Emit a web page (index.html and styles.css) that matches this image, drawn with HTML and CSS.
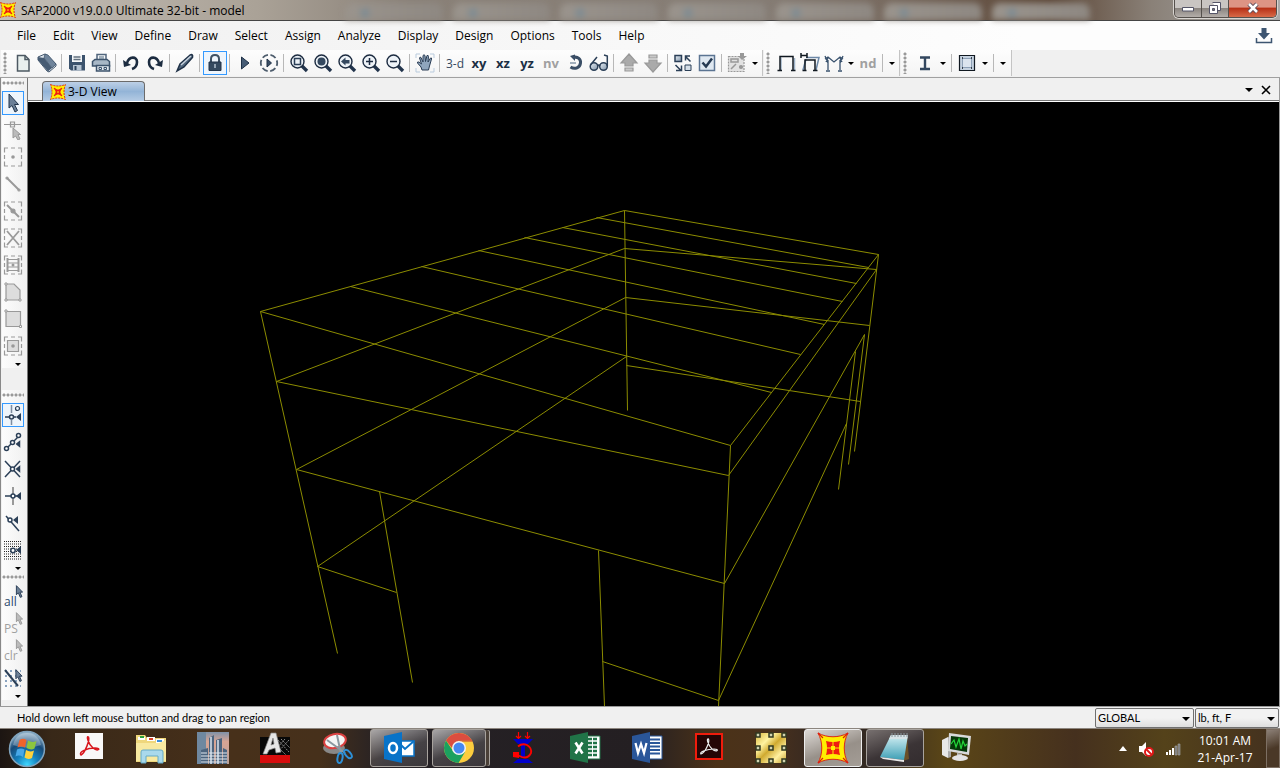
FILE: index.html
```html
<!DOCTYPE html>
<html lang="en">
<head>
    <meta charset="UTF-8">
    <meta name="viewport" content="width=device-width, initial-scale=1.0">
    <title>SAP2000 v19.0.0 Ultimate 32-bit - model</title>
    <link rel="stylesheet" href="styles.css">
</head>
<body>
    <!-- shared shapes -->
    <svg class="defs" width="0" height="0" aria-hidden="true">
        <defs>
            <linearGradient id="steel" x1="0" y1="0" x2="1" y2="1">
                <stop offset="0" stop-color="#e8eff5"/><stop offset="1" stop-color="#7f93a8"/>
            </linearGradient>
            <linearGradient id="gold" x1="0" y1="0" x2="1" y2="1">
                <stop offset="0" stop-color="#d8b840"/><stop offset=".3" stop-color="#fff3a0"/>
                <stop offset=".5" stop-color="#d0aa30"/><stop offset=".75" stop-color="#fff0a0"/><stop offset="1" stop-color="#c8a330"/>
            </linearGradient>
            <linearGradient id="teal" x1="0" y1="0" x2="0" y2="1">
                <stop offset="0" stop-color="#d5f0f4"/><stop offset="1" stop-color="#3d9fb5"/>
            </linearGradient>
            <linearGradient id="dusk" x1="0" y1="0" x2="0" y2="1">
                <stop offset="0" stop-color="#7f92a8"/><stop offset=".3" stop-color="#d8a594"/><stop offset="1" stop-color="#b9a29c"/>
            </linearGradient>
            <radialGradient id="orb" cx=".5" cy=".95" r=".9">
                <stop offset="0" stop-color="#3fd8ff"/><stop offset=".35" stop-color="#1480bd"/><stop offset=".7" stop-color="#174a78"/><stop offset="1" stop-color="#8fb0c8"/>
            </radialGradient>
            <symbol id="sap" viewBox="0 0 32 32">
                <path d="M1 1C10 6 22 6 31 1C26 10 26 22 31 31C22 26 10 26 1 31C6 22 6 10 1 1Z" fill="#ffee00" stroke="#d82818" stroke-width="1"/>
                <path d="M9 9Q16 11 23 9Q21 16 23 23Q16 21 9 23Q11 16 9 9Z" fill="#f01c10"/>
                <path d="M16 10V22M10 16H22" stroke="#ffee00" stroke-width="1"/>
                <path d="M14 14H18V18H14Z" fill="#ffee00"/>
                <path d="M1 1L6 6M31 1L26 6M1 31L6 26M31 31L26 26" stroke="#e01c10" stroke-width="1.2"/>
            </symbol>
            <symbol id="sap-small" viewBox="0 0 16 16">
                <path d="M.5 .5Q8 3.500 15.500 .5Q12.500 8 15.500 15.500Q8 12.500 .5 15.500Q3.500 8 .5 .5Z" fill="#ffee00" stroke="#e02818" stroke-width="1" stroke-dasharray="2 1"/>
                <path d="M4 4L7 6H9L12 4L10 7V9L12 12L9 10H7L4 12L6 9V7Z" fill="#f01c10" stroke="#f01c10"/>
                <path d="M8 7V9" stroke="#ffee00"/>
            </symbol>
            <symbol id="lens" viewBox="0 0 20 20">
                <path d="M13 13L18 18" stroke="#22344c" stroke-width="3.4"/>
                <circle cx="8.500" cy="8.500" r="6.500" fill="#edf2f7" stroke="#1c2b40" stroke-width="1.4"/>
            </symbol>
            <symbol id="cursor" viewBox="0 0 12 20">
                <path d="M2 1V15L5 12L8 19L10.500 18L7.500 11H11.500Z"/>
            </symbol>
            <symbol id="dashed" viewBox="0 0 20 20">
                <path d="M1.500 5.500V1H5M8 1H12M15 1H18.500V5.500M18.500 8V12M18.500 14.500V19H15M12 19H8M5 19H1.500V14.500M1.500 12V8" fill="none"/>
            </symbol>
            <symbol id="snap" viewBox="0 0 5 8"><path d="M5 0V8L0 4Z" fill="#2b3f57" stroke="none"/></symbol>
        </defs>
    </svg>

    <div class="desktop">
        <header class="titlebar">
            <svg class="title-icon" width="16" height="16"><use href="#sap-small"/></svg>
            <h1>SAP2000 v19.0.0 Ultimate 32-bit - model</h1>
            <div class="ghost-tabs"><i></i><i></i><i></i><i></i><i></i><i></i><i></i></div>
            <div class="window-buttons">
                <button aria-label="Minimize"><svg width="14" height="14"><path d="M1.500 6.500H12.500V10H1.500Z" fill="#fff" stroke="#555568"/></svg></button>
                <button aria-label="Restore"><svg width="14" height="14"><path d="M4.500 1.500H12.500V9.500H10M1.500 4.500H9.500V12.500H1.500Z" fill="#fff" stroke="#555568"/><path d="M4.500 7.500H6.500V9.500H4.500Z" fill="#777" stroke="#555568"/></svg></button>
                <button class="close" aria-label="Close"><svg width="14" height="14"><path d="M3 3L11 11M11 3L3 11" stroke="#5b4a58" stroke-width="4.500"/><path d="M3 3L11 11M11 3L3 11" stroke="#fff" stroke-width="2.500"/></svg></button>
            </div>
        </header>

        <nav class="menu">
            <button>File</button><button>Edit</button><button>View</button><button>Define</button><button>Draw</button><button>Select</button><button>Assign</button><button>Analyze</button><button>Display</button><button>Design</button><button>Options</button><button>Tools</button><button>Help</button>
            <button class="download" aria-label="Download"><svg width="18" height="18"><path d="M6.500 1H11.500V6H15L9 12.500L3 6H6.500Z" fill="#3d5571"/><path d="M1.500 11V15.500H16.500V11" fill="none" stroke="#3d5571" stroke-width="1.500"/></svg></button>
        </nav>

        <div class="toolbar">
            <div class="strip">
                <span class="grip"></span>
                <button aria-label="New"><svg class="icon"><path d="M4.500 2.500H12L16 6.500V18H4.500Z" fill="#e9f0ee" stroke="#4d5963"/><path d="M12 2.500V6.500H16" stroke="#4d5963"/></svg></button>
                <button aria-label="Open"><svg class="icon"><path d="M1 4L8 1L19 11V13L12 19L10 18L1 7Z" fill="#dfe6ed" stroke="#41556c" stroke-width="1"/><path d="M1 4L7 5L15 15L11 18.500L1 7Z" fill="#465b73" stroke="none"/><path d="M8 1L11 2L19 11L15 15L7 5Z" fill="#6f849b" stroke="#41556c" stroke-width=".8"/></svg></button>
                <span class="sep"></span>
                <button aria-label="Save"><svg class="icon"><path d="M2 2H18V17.500H4L2 15.500Z" fill="#3c536d" stroke="none"/><path d="M5 2H15V9H5Z" fill="#f5f7f9" stroke="none"/><path d="M6.500 4H13.500M6.500 6.500H13.500" stroke="#62707e"/><path d="M6 12H14.500V17.500H6Z" fill="#b5c3d1" stroke="none"/><path d="M7.500 13H9.500V17H7.500Z" fill="#2d435c" stroke="none"/></svg></button>
                <button aria-label="Print"><svg class="icon"><path d="M6 8V1.500H15V8" fill="#f6f8fa" stroke="#51667d"/><path d="M8 4H13M8 6H13" stroke="#8798a8"/><path d="M1.500 8.500L4 6.500H16L18.500 8.500V13H1.500Z" fill="#a8b7c6" stroke="#3d536c"/><path d="M5.500 12.500H18.500V18H5.500Z" fill="#e2e8ef" stroke="#3d536c"/><path d="M8 14.500H10.500V16.500H8ZM13 14.500H15.500V16.500H13Z" stroke="#3d536c" stroke-width="1"/></svg></button>
                <span class="sep"></span>
                <button aria-label="Undo"><svg class="icon"><path d="M6 10C8 3 16 3 16 9C16 12 14 15 11 16" stroke-width="2.600" stroke="#1c2c40"/><path d="M2 7L10 12L3 14Z" fill="#1c2c40" stroke="none"/></svg></button>
                <button aria-label="Redo"><svg class="icon"><path d="M14 10C12 3 4 3 4 9C4 12 6 15 9 16" stroke-width="2.600" stroke="#1c2c40"/><path d="M18 7L10 12L17 14Z" fill="#1c2c40" stroke="none"/></svg></button>
                <span class="sep"></span>
                <button aria-label="Refresh window"><svg class="icon"><path d="M2 18L5 11L14.500 2.500Q18.500 0 17.500 4.500L9 14Z" fill="#52677e" stroke="#1f3147"/><path d="M6 12L16 3" stroke="#c7d2dd"/></svg></button>
                <span class="sep"></span>
                <button class="active" aria-label="Unlock model"><svg class="icon"><path d="M6 9V6Q6 2 10 2Q14 2 14 6V9" stroke="#3e5164" stroke-width="2"/><path d="M4 9H16V17.500H4Z" fill="#34495f" stroke="#22344a" stroke-width="1"/><path d="M10 11V15" stroke="#b2c0ce"/></svg></button>
                <span class="sep"></span>
                <button aria-label="Run analysis"><svg class="icon"><path d="M6.500 4L14 10L6.500 16Z" fill="#465c75" stroke="#1f3147" stroke-width="1"/></svg></button>
                <button aria-label="Model alive"><svg class="icon"><circle cx="10" cy="10" r="8.200" stroke="#4d5c6c" stroke-width="1.800" stroke-dasharray="6 2.580" stroke-dashoffset="3"/><path d="M8 6L12.500 10L8 14Z" fill="#3a4e65" stroke="#1f3147" stroke-width="1"/></svg></button>
                <span class="sep"></span>
                <button aria-label="Rubber band zoom"><svg class="icon"><use href="#lens"/><path d="M5.500 5.500H11.500V11.500H5.500Z"/></svg></button>
                <button aria-label="Restore full view"><svg class="icon"><use href="#lens"/><circle cx="8.500" cy="8.500" r="4" fill="#34485f" stroke="none"/></svg></button>
                <button aria-label="Previous zoom"><svg class="icon"><use href="#lens"/><path d="M4 8.500L8.500 4.500V7H12.500V10.500H8.500V12.500Z" fill="#34485f" stroke="none"/></svg></button>
                <button aria-label="Zoom in"><svg class="icon"><use href="#lens"/><path d="M8.500 5V12M5 8.500H12" stroke="#1c2b40"/></svg></button>
                <button aria-label="Zoom out"><svg class="icon"><use href="#lens"/><path d="M5 8.500H12" stroke="#1c2b40"/></svg></button>
                <span class="sep"></span>
                <button aria-label="Pan"><svg class="icon"><path d="M1 5V1H5M15 1H19V5M19 15V19H15M5 19H1V15" stroke="#b9cbdd" stroke-width="1"/><path d="M7 17L6 14L2.500 10Q2 8.500 4 9L6.500 11L4.500 5Q5 3.500 6 4.500L8 9L8 2.500Q9 1 10 2.500L10.500 8.500L12 2.500Q13.500 2 13.500 3.500L13 9L15.500 5Q17 4.500 16.500 6L14.500 13L13.500 17Z" fill="#8fa5bd" stroke="#2a3d55" stroke-width="1"/></svg></button>
                <span class="sep"></span>
                <button class="txt">3-d</button>
                <button class="txt bold">xy</button>
                <button class="txt bold">xz</button>
                <button class="txt bold">yz</button>
                <button class="txt bold off">nv</button>
                <button aria-label="Rotate 3D view"><svg class="icon"><path d="M8 4.500C13 3 16 6.500 15.500 10C15 14.500 10 17 5.500 14" stroke="#3a4e66" stroke-width="3"/><path d="M5 3L10 1.500V8Z" fill="#3a4e66" stroke="none"/><path d="M5 10H11" stroke="#8798aa"/></svg></button>
                <button aria-label="Perspective toggle"><svg class="icon"><circle cx="5" cy="13.500" r="3.800" fill="url(#steel)"/><circle cx="14.500" cy="13.500" r="3.800" fill="url(#steel)"/><path d="M1.500 12L8 4M18.300 13V3L15 2M8.500 13Q10 11 11 13"/></svg></button>
                <span class="sep"></span>
                <button disabled aria-label="Move up in list"><svg class="icon gray"><path d="M10 1L18 10H14V13H6V10H2Z" fill="#aaa"/><path d="M6 15H14V18H6Z" fill="#c8c8c8"/></svg></button>
                <button disabled aria-label="Move down in list"><svg class="icon gray"><path d="M10 19L18 10H14V7H6V10H2Z" fill="#aaa"/><path d="M6 2H14V5H6Z" fill="#c8c8c8"/></svg></button>
                <span class="sep"></span>
                <button aria-label="Object shrink toggle"><svg class="icon"><path d="M2 2.500H8.500V8.500H2Z" fill="url(#steel)"/><path d="M12 12H18V17.500H12Z" fill="#d5dee7" stroke-width="1"/><path d="M17.500 8.500L12.500 3.500M12.500 7.500V3H17M2.500 12L8 17.500M3 17.500H8.500V12.500" stroke-width="1.500"/></svg></button>
                <button aria-label="Set display options"><svg class="icon"><path d="M2.500 2.500H17.500V17.500H2.500Z" fill="#dfe8f1" stroke="#5b7492"/><path d="M5.500 9.500L9 13.500L15 5.500" stroke="#263a52" stroke-width="2.500"/></svg></button>
                <span class="sep"></span>
                <button disabled aria-label="Assign to group"><svg class="icon gray"><path d="M1.500 3.500H17V18.500H1.500Z" fill="#e2e2e2" stroke-dasharray="2 1"/><path d="M4 6H11V9H4ZM4 16L9 11" stroke-width="1.500"/><circle cx="14" cy="14" r="1.500" fill="#999"/><path d="M13 0H17V3H20L15 7L11 3H13Z" fill="#999" stroke="none"/></svg></button>
                <button class="drop" aria-label="More view tools"></button>
            </div>
            <div class="strip">
                <span class="grip"></span>
                <button aria-label="Show undeformed shape"><svg class="icon"><path d="M5 4.500V17M18.500 5V17" stroke="#9db2c8"/><path d="M4 17V3.500H17V17M1.500 17.500H6M15 17.500H19.500" stroke="#101820"/></svg></button>
                <button aria-label="Show deformed shape"><svg class="icon"><path d="M6 4.500H19L16 17M6 6L3 17" stroke="#6d89a8"/><path d="M1 0V5M7 0V5M1 2.500H7M5 17V7H15V17M2.500 17.500H6.500M13 17.500H17.500" stroke="#101820"/></svg></button>
                <button aria-label="Show forces"><svg class="icon"><path d="M4 17V7M16 17V7M1 3L4 10M19 3L16 10M1 6L4 4L10 9L16 4L19 6M4 5L2 9M16 5L18 9M2 18H6M14 18H18" stroke="#38516d" stroke-width="1.300"/></svg></button>
                <button class="drop small" aria-label="Force options"></button>
                <button class="txt bold off">nd</button>
                <span class="sep"></span>
                <button class="drop" aria-label="More display tools"></button>
            </div>
            <div class="strip">
                <span class="grip"></span>
                <button aria-label="Frame design"><svg class="icon"><path d="M5 4.500H15M5 16H15M10 4.500V16" stroke="#33475f" stroke-width="2.400"/></svg></button>
                <button class="drop" aria-label="Frame design options"></button>
                <span class="sep"></span>
                <button aria-label="Shell design"><svg class="icon"><path d="M2.500 2.500H17.500V17.500H2.500Z" fill="#c5d2e0" stroke="#101820" stroke-width="1.200"/><path d="M5.500 5.500H14.500V14.500H5.500Z" fill="#dbe4ee" stroke="#8da0b6" stroke-width="1"/><path d="M5 5H6M14 5H15M5 15H6M14 15H15" stroke="#101820"/></svg></button>
                <button class="drop" aria-label="Shell design options"></button>
                <span class="sep"></span>
                <button class="drop" aria-label="More design tools"></button>
            </div>
        </div>

        <div class="work">
            <aside class="side">
                <div class="side-group draw">
                    <span class="grip"></span>
                    <button class="active" aria-label="Select pointer"><svg class="icon"><path d="M6 1V15L9 12.500L12 19L14.500 17.500L11.500 11.500H15.500Z" fill="#6a7f97" stroke="#22354c" stroke-width="1"/></svg></button>
                    <button aria-label="Reshape object"><svg class="icon gray"><path d="M1 4.500H18M7.500 2H11.500V7H7.500Z" fill="#eee"/><path d="M10 8V18L12.500 16L15 20L17 19L15 14.500H17.500Z" fill="#bbb" stroke-width="1"/></svg></button>
                    <button aria-label="Draw special joint"><svg class="icon gray"><use href="#dashed"/><circle cx="10" cy="10" r="1.800" fill="#999" stroke="none"/></svg></button>
                    <button aria-label="Draw frame"><svg class="icon gray"><path d="M4 4L16 16" stroke-width="2"/><circle cx="4" cy="4" r="1"/><circle cx="16" cy="16" r="1"/></svg></button>
                    <button aria-label="Quick draw frame"><svg class="icon gray"><use href="#dashed"/><path d="M4 4L16 16" stroke-width="2"/><circle cx="10" cy="10" r="2" fill="#999"/></svg></button>
                    <button aria-label="Quick draw braces"><svg class="icon gray"><use href="#dashed"/><path d="M4 3L16 17M16 3L4 17" stroke-width="1.800"/></svg></button>
                    <button aria-label="Quick draw secondary beams"><svg class="icon gray"><use href="#dashed"/><path d="M4.500 3V17M15.500 3V17" stroke-width="2"/><path d="M5 4.500H15M5 8H15M5 12H15M5 15.500H15" stroke-width="1"/><circle cx="10" cy="10" r="1.500" fill="#999" stroke="none"/></svg></button>
                    <button aria-label="Draw poly area"><svg class="icon gray"><path d="M3 2H11L17 8V18H3Z" fill="#ddd"/><path d="M2 1H4V3H2ZM2 17H4V19H2ZM16 17H18V19H16Z" fill="#fff" stroke-width="1"/></svg></button>
                    <button aria-label="Draw rectangular area"><svg class="icon gray"><path d="M3 2.500H17.500V17.500H3Z" fill="#ddd"/><path d="M2 1H4V3H2ZM16.500 16.500H18.500V18.500H16.500Z" fill="#fff" stroke-width="1"/></svg></button>
                    <button aria-label="Quick draw area"><svg class="icon gray"><use href="#dashed"/><path d="M4.500 4.500H15.500V15.500H4.500Z" fill="#ddd"/><circle cx="10" cy="10" r="1.800" fill="#999" stroke="none"/></svg></button>
                    <button class="drop" aria-label="More draw tools"></button>
                </div>
                <div class="side-group">
                    <span class="grip"></span>
                    <button class="active" aria-label="Snap to points"><svg class="icon"><path d="M8.500 0V8M8.500 15V20" stroke="#7d8da0"/><circle cx="8.500" cy="12" r="2"/><circle cx="14.500" cy="3.500" r="2" stroke-width="1.200"/><path d="M2 12H6M11 12H13"/><use href="#snap" x="13" y="8" width="5" height="8"/></svg></button>
                    <button aria-label="Snap to ends and midpoints"><svg class="icon"><path d="M4 16L16 4"/><g fill="#fff"><circle cx="3.500" cy="16.500" r="2"/><circle cx="9.500" cy="10.500" r="2"/><circle cx="15.500" cy="3.500" r="2"/></g><use href="#snap" x="12.500" y="8" width="5" height="8"/></svg></button>
                    <button aria-label="Snap to intersections"><svg class="icon"><path d="M2 2L17 18M17 2L2 18"/><circle cx="9.500" cy="10" r="2" fill="#fff"/><use href="#snap" x="12.500" y="6" width="5" height="8"/></svg></button>
                    <button aria-label="Snap to perpendicular"><svg class="icon"><path d="M10 1V19" stroke="#999" stroke-width="2"/><path d="M2 10H15"/><circle cx="10" cy="10" r="2" fill="#fff"/><use href="#snap" x="13" y="6" width="5" height="8"/></svg></button>
                    <button aria-label="Snap to lines and edges"><svg class="icon"><path d="M3 3L16 18"/><circle cx="7" cy="7" r="2" fill="#fff"/><use href="#snap" x="10" y="3" width="5" height="8"/></svg></button>
                    <button aria-label="Snap to fine grid"><svg class="icon"><path d="M1 1.500H18M1 4H18M1 6.500H18M1 9H18M1 11.500H18M1 14H18M1 16.500H18M1 19H18" stroke="#222" stroke-width="1" stroke-dasharray="1 1"/><circle cx="10" cy="10.500" r="2.200" fill="#fff"/><use href="#snap" x="13" y="6" width="5" height="8"/></svg></button>
                    <button class="drop" aria-label="More snap tools"></button>
                </div>
                <div class="side-group">
                    <span class="grip"></span>
                    <button class="pick"><span>all</span><svg width="8" height="13"><use href="#cursor" fill="#6d8096" stroke="#2b3f57" stroke-width="1.500"/></svg></button>
                    <button class="pick off"><span>PS</span><svg width="8" height="13"><use href="#cursor" fill="#bbb" stroke="#999" stroke-width="1.500"/></svg></button>
                    <button class="pick off"><span>clr</span><svg width="8" height="13"><use href="#cursor" fill="#bbb" stroke="#999" stroke-width="1.500"/></svg></button>
                    <button aria-label="Intersecting line select"><svg class="icon"><path d="M2 3H18M2 8H18M2 13H18M2 18H18" stroke="#8aa3bf" stroke-width="2" stroke-dasharray="2 3"/><path d="M2 2L15 18" stroke-width="2"/><use href="#cursor" x="11" y="1" width="9" height="13" fill="#6d8096"/></svg></button>
                    <button class="drop" aria-label="More select tools"></button>
                </div>
            </aside>

            <main class="view">
                <div class="tabs">
                    <button class="tab"><svg width="16" height="16"><use href="#sap-small"/></svg>3-D View</button>
                    <div class="tab-tools">
                        <button class="drop" aria-label="Window list"></button>
                        <button aria-label="Close view"><svg width="10" height="10"><path d="M1 1L9 9M9 1L1 9" stroke="#000" stroke-width="1.600"/></svg></button>
                    </div>
                </div>
                <!-- frame model, drawn in window coordinates -->
                <svg class="model" viewBox="28 102 1251 604" preserveAspectRatio="xMidYMid meet">
                    <g transform="translate(-0.500 0.500)">
                        <!-- roof -->
                        <path d="M261 311L625 210L879 254L731 445Z"/>
                        <path d="M597 217L869 267M563 227L857 283M525 237L843 301M479 250L825 324M422 266L801 354M351 286L772 392"/>
                        <!-- girts -->
                        <path d="M277 381L625 248L877 269L729 475Z"/>
                        <path d="M297 469L626 297L870 325M297 469L725 583L865 334"/>
                        <path d="M397 592L318 566L627 356M627 365L861 401M603 661L719 700L847 423"/>
                        <!-- columns -->
                        <path d="M261 311L338 653M625 210L628 410M879 254L855 451M731 445L719 706"/>
                        <path d="M380 491L413 682M599 550L605 706M865 334L849 464M856 351L839 489"/>
                    </g>
                </svg>
            </main>
        </div>

        <footer class="status">
            <span class="hint">Hold down left mouse button and drag to pan region</span>
            <label class="combo coords"><select aria-label="Coordinate system"><option>GLOBAL</option></select></label>
            <label class="combo units"><select aria-label="Units"><option>lb, ft, F</option></select></label>
        </footer>

        <div class="taskbar">
            <button class="start" aria-label="Start"><svg width="38" height="38" viewBox="0 0 38 38"><circle cx="19" cy="19" r="17.500" fill="url(#orb)" stroke="#7fa3bd" stroke-width="1.500"/><path d="M5 15Q8 3 19 3Q30 3 33 15Q19 20 5 15Z" fill="#fff" opacity=".28"/><path d="M11.500 10Q15 7.500 18.500 10L17 17.500Q13 15.500 9.500 17.500Z" fill="#f0642c"/><path d="M20 10.500Q24 13 28.500 11L26.500 18.500Q23 20.500 18.500 18Z" fill="#8cc63e"/><path d="M9 19.500Q13 17.500 16.500 19.500L15 27Q11 24.500 7.500 26.500Z" fill="#48a8e8"/><path d="M18 20Q22 22.500 26 20.500L24 28Q20 30 16.500 27.500Z" fill="#ffd23c"/></svg></button>

            <button class="task" aria-label="Acrobat"><svg class="app"><path d="M2 1H30V27H2Z" fill="#f8f8f8"/><path d="M8 23C5 20 14 16 22 16C29 16 25 20 20 16C15 12 13 3 15.500 5C17 8 12 21 8 23Z" fill="none" stroke="#d8151c" stroke-width="1.500"/></svg></button>
            <button class="task" aria-label="Explorer"><svg class="app"><path d="M1 8V3H10L12 6H31V30H1Z" fill="#efd77c"/><path d="M3 5H10V8H3ZM12 5H20V9H12ZM21 7H29V11H21Z" fill="#fff"/><path d="M5 4H9V6H5Z" fill="#2ca03c"/><path d="M14 6H18V8H14Z" fill="#d84028"/><path d="M22 8H27V10H22Z" fill="#3c8ed8"/><path d="M1 11H24L31 8V29H1Z" fill="#f8e9a0"/><path d="M6 31V20Q6 18 8 18H26Q28 18 28 20V31H23V24H11V31Z" fill="#a9d9ec" stroke="#65aac6"/></svg></button>
            <button class="task" aria-label="Building design"><svg class="app"><path d="M0 0H32V32H0Z" fill="url(#dusk)"/><path d="M0 0H9V32H0Z" fill="#6f88a0"/><path d="M4 32V18L11 16V32ZM12 32V6L17 3V32ZM19 32V8L25 6V32ZM26 32V16L30 18V32Z" fill="#4c647e"/><path d="M14 5V32M21 8V32" stroke="#d9e4ee" stroke-width="1.500"/><path d="M4 21H10M12 21H30M4 24H30M4 27H30M4 30H30" stroke="#e0e8ef" stroke-width="1.200"/></svg></button>
            <button class="task" aria-label="AutoCAD"><svg class="app"><path d="M1 5H31V24H1Z" fill="#080808"/><path d="M19 8L30 20M22 7L31 16M18 14L27 23M30 8L19 20M26 7L18 16" stroke="#888" stroke-dasharray="2 1"/><path d="M1 23H31V31H1Z" fill="#d80c0c"/><path d="M4 22L12 1H17L22 20L17 21L16 16L10 18L8 22ZM12 13L15 12L14 6Z" fill="#e6e6e6" stroke="#888" stroke-width=".7"/></svg></button>
            <button class="task" aria-label="Snipping tool"><svg class="app"><ellipse cx="13" cy="16" rx="11" ry="6" fill="#888"/><ellipse cx="14" cy="9" rx="11" ry="7" transform="rotate(-12 14 9)" fill="#f5f5f5" stroke="#d94040" stroke-width="2"/><path d="M6 8L24 21M16 3L20 22" stroke="#8b979f" stroke-width="2"/><ellipse cx="19" cy="26" rx="2.500" ry="5" transform="rotate(10 19 26)" fill="none" stroke="#2d90d8" stroke-width="2"/><ellipse cx="27" cy="22" rx="2.500" ry="5" transform="rotate(-40 27 22)" fill="none" stroke="#2d90d8" stroke-width="2"/></svg></button>
            <button class="task open" aria-label="Outlook"><svg class="app"><path d="M17 9H31V24H17Z" fill="#fff" stroke="#0873c8" stroke-width="1.500"/><path d="M17 12L22 17L31 9" fill="none" stroke="#0873c8" stroke-width="2"/><path d="M1 4L19 0V31L1 27Z" fill="#0873c8"/><ellipse cx="10" cy="16" rx="4" ry="5" fill="none" stroke="#fff" stroke-width="2.500"/></svg></button>
            <button class="task open stack" aria-label="Chrome"><svg class="app"><circle cx="16" cy="16" r="15" fill="#fccd3e"/><path d="M3 8.500A15 15 0 0 1 29 8.500H16L9 16Z" fill="#dc4d3f"/><path d="M3 8.500A15 15 0 0 0 15.500 31L22 20L10 19Z" fill="#1ba15f"/><path d="M16 9H29.500" stroke="#c53a30" stroke-width="1"/><circle cx="16" cy="16" r="7" fill="#f3f3f3"/><circle cx="16" cy="16" r="5.500" fill="#4688f1"/></svg></button>
            <button class="task" aria-label="Load analysis"><svg class="app"><path d="M11.500 0V6M20.500 0V6M9 4L11.500 6.500L14 4M18 4L20.500 6.500L23 4" fill="none" stroke="#f00" stroke-width="1.200"/><path d="M6 7H26L21 12H11ZM14 12H18V26H14ZM11 27H21L26 31H6Z" fill="#00c"/><path d="M11 14.500Q15 11 20 13Q25 16 24 21Q21 27 15 25L10 23" fill="none" stroke="#f00" stroke-width="1.800"/><path d="M6 20H12V26L6 25Z" fill="#f00"/></svg></button>
            <button class="task" aria-label="Excel"><svg class="app"><path d="M17 4H31V27H17Z" fill="#fff" stroke="#207347" stroke-width="1"/><path d="M19 7H29M19 11H29M19 15H29M19 19H29M19 23H29" stroke="#207347" stroke-width="2.500" stroke-dasharray="4 1"/><path d="M1 4L19 0V31L1 27Z" fill="#207347"/><path d="M6.500 10.500L13.500 21.500M13.500 10.500L6.500 21.500" stroke="#fff" stroke-width="2.600"/></svg></button>
            <button class="task" aria-label="Word"><svg class="app"><path d="M17 4H31V27H17Z" fill="#fff" stroke="#2a5699" stroke-width="1"/><path d="M19 7.500H29M19 11H29M19 14.500H29M19 18H29M19 21.500H29" stroke="#2a5699" stroke-width="1.800"/><path d="M1 4L19 0V31L1 27Z" fill="#2a5699"/><path d="M4.500 11L7 21L10 12L13 21L15.500 11" fill="none" stroke="#fff" stroke-width="2.200"/></svg></button>
            <button class="task" aria-label="Acrobat Reader"><svg class="app"><path d="M3 2H29V27H3Z" fill="#250505" stroke="#f01c0c" stroke-width="2"/><path d="M8 22C6 20 14 17 21 17C27 17 24 21 19 17C15 13 13 6 15.500 7C17 10 12 21 8 22Z" fill="none" stroke="#eee" stroke-width="1.200"/></svg></button>
            <button class="task" aria-label="Section builder"><svg class="app"><path d="M1 1H31V31H1Z" fill="url(#gold)"/><g fill="#d2d4b0" stroke="#303820" stroke-width="1.500"><path d="M1 1H5V5H1ZM14 1H18V5H14ZM27 1H31V5H27ZM1 14H5V18H1ZM14 14H18V18H14ZM27 14H31V18H27ZM1 27H5V31H1ZM14 27H18V31H14ZM27 27H31V31H27Z"/></g></svg></button>
            <button class="task open current" aria-label="SAP2000"><svg class="app"><use href="#sap"/></svg></button>
            <button class="task open notepad" aria-label="Notepad"><svg class="app"><path d="M28 4L30 27L24 29Z" fill="#6b5026"/><path d="M12 3H29L25 28L1 25Z" fill="url(#teal)"/><path d="M12 3H29L28 7H10Z" fill="#d7e3e8"/><path d="M13 1V5M16 1V5M19 1V5M22 1V5M25 1V5M28 1V5" stroke="#89969d"/><path d="M1 25L25 28V30L4 27Z" fill="#e8e8e8"/></svg></button>
            <button class="task" aria-label="Resource monitor"><svg class="app"><path d="M1 8L7 5V26L1 23Z" fill="#e8e8e8"/><path d="M7 5L10 6V25L7 26Z" fill="#aaa"/><path d="M8 1L30 4L28 23L7 19Z" fill="#d8dadb"/><path d="M10 4L27 6L26 20L9 17Z" fill="#053808"/><path d="M10 12L13 8L15 15L18 7L20 17L22 9L24 14L26 12" fill="none" stroke="#23d43a" stroke-width="1.200"/><path d="M16 21L21 22V26H16Z" fill="#bbb"/><ellipse cx="19" cy="26" rx="8" ry="3" fill="#e4e4e4"/></svg></button>

            <div class="tray">
                <svg width="8" height="5"><path d="M0 5L4 0L8 5Z" fill="#fff"/></svg>
                <svg width="16" height="16"><path d="M1 5H4L8 1V15L4 11H1Z" fill="#fff"/><circle cx="11" cy="11" r="4" fill="#fff" stroke="#e01818" stroke-width="2"/><path d="M8 8L14 14" stroke="#e01818" stroke-width="2"/></svg>
                <svg width="16" height="16"><path d="M1 11H3V14H1ZM4 9H6V14H4ZM7 7H9V14H7Z" fill="#fff"/><path d="M10 5H12V14H10ZM13 3H15V14H13Z" fill="#777" stroke="#aaa" stroke-width=".6"/></svg>
                <time class="clock">10:01 AM<br>21-Apr-17</time>
                <button class="show-desktop" aria-label="Show desktop"></button>
            </div>
        </div>
    </div>
</body>
</html>
```

FILE: styles.css
```css
* {
    box-sizing: border-box;
}
body {
    margin: 0;
    background: #fff;
    color: #000;
    font-family: "Open Sans", "Noto Sans", sans-serif;
    font-size: 12px;
}
button {
    margin: 0;
    padding: 0;
    border: 0;
    background: none;
    color: inherit;
    font: inherit;
}
svg {
    display: block;
    flex: none;
}
.defs {
    position: absolute;
}
.desktop {
    display: flex;
    flex-direction: column;
    height: calc(100vh - 16px);
    margin-right: 8px;
    background: #f0f0f0;
}

/* title bar */
.titlebar {
    display: flex;
    align-items: center;
    height: 21px;
    flex: none;
    border-bottom: 1px solid #444;
    background: linear-gradient(90deg, #c4beb6 0, #aaa297 20%, #8a8178 32%, #857c74 60%, #77695e 70%, #5c4636 82%, #8a8178 90%, #aaa 100%);
}
.title-icon {
    margin-right: 5px;
}
.titlebar h1 {
    margin: 0;
    font-size: 12px;
    font-weight: 400;
    white-space: nowrap;
}
.ghost-tabs {
    display: flex;
    flex: 1;
    gap: 10px;
    height: 20px;
    padding: 3px 84px 0 100px;
    align-self: flex-end;
    filter: blur(3px);
}
.ghost-tabs i {
    flex: 1;
    border-radius: 8px 8px 0 0;
    background: radial-gradient(circle at 20px 10px, #7b8b94 3px, transparent 6px), linear-gradient(90deg, #9a948d, #8e8882);
}
.window-buttons {
    display: flex;
    align-self: flex-start;
    height: 18px;
    margin-right: 3px;
    border: 1px solid #55504c;
    border-top: 0;
    border-radius: 0 0 5px 5px;
    box-shadow: 0 0 0 1px #d8d4d0;
    overflow: hidden;
}
.window-buttons button {
    display: flex;
    align-items: center;
    justify-content: center;
    width: 27px;
    padding-bottom: 2px;
    border-right: 1px solid #55504c;
    background: linear-gradient(#c9c5c2 45%, #8b8580 50%, #b4aeaa);
}
.window-buttons .close {
    width: 47px;
    border-right: 0;
    background: linear-gradient(#dd9484 40%, #b83218 50%, #d86a48);
}

/* menu */
.menu {
    display: flex;
    align-items: center;
    height: 29px;
    flex: none;
    padding: 0 7px 0 8px;
    background: linear-gradient(90deg, #f0f0f0, #fdfdfd 80%);
}
.menu button {
    padding: 0 8px 0 9px;
}
.menu .download {
    margin-left: auto;
    padding: 0;
}

/* toolbars */
.toolbar {
    display: flex;
    height: 28px;
    flex: none;
    gap: 1px;
    padding: 0 0 1px 1px;
    border-bottom: 1px solid #a0a0a0;
}
.strip {
    display: flex;
    align-items: center;
    padding-right: 1px;
    border-right: 1px solid #c4c4c4;
    background: linear-gradient(#fdfdfd, #f4f4f4);
}
.strip:last-child {
    padding-right: 2px;
}
.strip:last-child .grip {
    margin-right: 2px;
}
.strip button {
    display: flex;
    align-items: center;
    justify-content: center;
    width: 24px;
    height: 24px;
}
.icon {
    width: 20px;
    height: 20px;
    fill: none;
    stroke: #2b3f57;
    stroke-width: 1.5;
}
.icon.gray {
    stroke: #999;
    stroke-width: 1.2;
}
.grip {
    width: 10px;
    height: 22px;
    background: radial-gradient(circle at 4px 2px, #999 1px, transparent 2px) 0 0 / 10px 4px;
}
.sep {
    width: 1px;
    height: 18px;
    margin: 0 3px 0 2px;
    background: #b8b8b8;
}
.strip .drop {
    width: 12px;
}
.strip .small {
    width: 10px;
}
.drop::before {
    content: "";
    border: 3px solid transparent;
    border-top-color: #000;
    border-bottom: 0;
}
.txt {
    color: #34485f;
}
.bold {
    color: #1c2f44;
    font-size: 13px;
    font-weight: 700;
}
.off,
.txt.off {
    color: #a0a0a0;
}
.active {
    border: 1px solid #3399ff;
    background: #eef5fc;
}

/* work area */
.work {
    display: flex;
    flex: 1;
    min-height: 0;
}
.side {
    display: flex;
    flex-direction: column;
    width: 27px;
    flex: none;
    padding-left: 1px;
    border-left: 1px solid #888;
}
.side-group {
    display: flex;
    flex-direction: column;
    width: 24px;
    background: linear-gradient(90deg, #fcfcfc, #f0f0f0);
}
.side-group.draw {
    margin-bottom: 22px;
}
.side-group .grip {
    width: 22px;
    height: 10px;
    margin-bottom: 3px;
    background: radial-gradient(circle at 2px 5px, #999 1px, transparent 2px) 0 0 / 4px 10px;
}
.side-group button {
    display: flex;
    align-items: center;
    justify-content: center;
    width: 22px;
    height: 24px;
    margin-bottom: 3px;
}
.side-group .drop {
    height: 7px;
    padding-left: 9px;
    margin-bottom: 0;
}
.side-group .pick {
    align-items: flex-end;
    justify-content: space-between;
    padding: 0 1px 0 2px;
    color: #2b4a6c;
    line-height: 15px;
}
.side-group .pick span {
    width: 11px;
}
.side-group .pick svg {
    align-self: flex-start;
}
.side-group .off {
    color: #a0a0a0;
}
.view {
    display: flex;
    flex: 1;
    flex-direction: column;
    min-width: 0;
    border-left: 1px solid #777;
    border-right: 1px solid #999;
}
.tabs {
    display: flex;
    align-items: flex-end;
    justify-content: space-between;
    height: 24px;
    flex: none;
    padding: 0 8px 0 14px;
    border-bottom: 1px solid #fff;
    box-shadow: inset 0 -1px #777;
}
.tab {
    display: flex;
    align-items: center;
    gap: 2px;
    width: 103px;
    height: 20px;
    padding-left: 7px;
    border: 1px solid #6b6b6b;
    border-bottom: 0;
    border-radius: 4px 4px 0 0;
    background: linear-gradient(#bdd0e6, #93b4d7 50%, #b4cbe4);
}
.tab-tools {
    display: flex;
    align-items: center;
    gap: 8px;
    height: 22px;
}
.tab-tools .drop {
    display: flex;
}
.tab-tools .drop::before {
    border-width: 4px 4px 0;
}
.model {
    width: 100%;
    height: 100%;
    flex: 1;
    min-height: 0;
    background: #000;
    fill: none;
    stroke: #8c8c00;
    stroke-width: 1;
}

/* status bar */
.status {
    display: flex;
    align-items: center;
    gap: 1px;
    height: 22px;
    flex: none;
    padding: 0 1px 0 17px;
    border-top: 1px solid #999;
    font-family: Lato, "Liberation Sans", sans-serif;
    font-size: 11px;
}
.hint {
    flex: 1;
}
.combo {
    position: relative;
    height: 20px;
}
.combo::after {
    content: "";
    position: absolute;
    top: 9px;
    right: 4px;
    border: 4px solid transparent;
    border-top-color: #000;
    border-bottom: 0;
    pointer-events: none;
}
.combo select {
    width: 100%;
    height: 20px;
    padding: 0 2px;
    border: 1px solid #707070;
    border-radius: 2px;
    appearance: none;
    background: linear-gradient(#f2f2f2 50%, #dedede);
    color: #000;
    font: inherit;
}
.coords {
    width: 99px;
}
.units {
    width: 84px;
}

/* taskbar */
.taskbar {
    display: flex;
    height: 40px;
    flex: none;
    border-top: 1px solid #8c857e;
    background: linear-gradient(90deg, #1c1512 0, #382818 4%, #47301a 18%, #46301b 25%, #252125 30%, #241f22 50%, #4b3218 56%, #4a321c 60%, #2a2325 66%, #5b4617 74%, #45301e 84%, #54421a 91%, #43301f 100%);
}
.start {
    width: 58px;
    padding-left: 8px;
}
.task {
    display: flex;
    align-items: center;
    justify-content: center;
    width: 58px;
    height: 38px;
    margin: 0 2px;
}
.app {
    width: 32px;
    height: 32px;
}
.open {
    border: 1px solid #a8a39e;
    border-radius: 3px;
    background: linear-gradient(160deg, rgba(255, 255, 255, .6), rgba(255, 255, 255, .15) 55%, rgba(255, 255, 255, .1));
}
.stack {
    width: 54px;
    margin-right: 6px;
    box-shadow: 4px 0 0 -1px #4a4038, 5px 0 0 -1px #a8a39e;
}
.current {
    border-color: #eee;
    background: linear-gradient(160deg, #dedad6, #979089 55%, #a49d96);
}
.notepad {
    background: linear-gradient(160deg, #77706f, #3b3436 55%, #332c2e);
}
.tray {
    display: flex;
    align-items: center;
    gap: 11px;
    margin-left: auto;
    color: #fff;
}
.clock {
    width: 70px;
    margin-left: -2px;
    font-size: 12px;
    line-height: 17px;
    text-align: center;
}
.show-desktop {
    width: 14px;
    height: 39px;
    margin-left: -5px;
    border: 1px solid #7d6f63;
    background: linear-gradient(160deg, #8c8077, #4a3827 50%);
}
```
